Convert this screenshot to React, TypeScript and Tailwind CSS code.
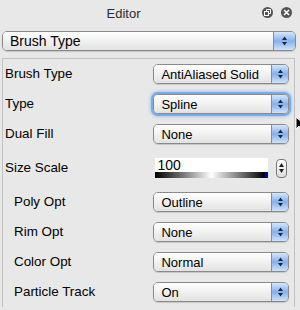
import type { JSX } from "react"

const font = { fontFamily: '"Liberation Sans", Arial, sans-serif' }

function Arrows(): JSX.Element {
  return (
    <svg width="7" height="12" viewBox="0 0 7 12" className="block">
      <path d="M3.5 1.5 L6 5 L1 5 Z" fill="#1b2a44" />
      <path d="M3.5 10.5 L6 7 L1 7 Z" fill="#1b2a44" />
    </svg>
  )
}

function Popup({ value, focus = false, wide = false }: { value: string; focus?: boolean; wide?: boolean }): JSX.Element {
  return (
    <div
      className={
        "flex h-[20px] items-stretch rounded-[5px] border border-[#8a8a8a] overflow-hidden " +
        (focus ? "shadow-[0_0_0_2px_#7fa9e4,0_0_3px_3px_#a9c6ef]" : "shadow-[0_1px_1px_rgba(0,0,0,0.15)]") +
        (wide ? " w-full" : " w-[137px]")
      }
    >
      <div className="flex flex-1 items-center bg-gradient-to-b from-[#ffffff] via-[#f1f1f1] to-[#e2e2e2] pl-[7px] text-[13px] leading-none text-[#000]">
        <span className={wide ? "text-[14px]" : ""}>{value}</span>
      </div>
      <div
        className={
          "flex items-center justify-center border-l border-[#6b8fc7] bg-gradient-to-b from-[#d7e7fb] via-[#86b1ea] to-[#cfe2fb] " +
          (wide ? "w-[22px]" : "w-[17px]")
        }
      >
        <Arrows />
      </div>
    </div>
  )
}

function Row({ label, indent = false, h = "h-[30px]", children }: { label: string; indent?: boolean; h?: string; children: JSX.Element }): JSX.Element {
  return (
    <div className={"flex items-center " + h}>
      <div className={"w-[150px] text-[13.4px] text-[#000] " + (indent ? "pl-[9px]" : "pl-0")}>{label}</div>
      {children}
    </div>
  )
}

export default function App(): JSX.Element {
  return (
    <div className="relative h-[310px] w-[300px] overflow-hidden bg-[#e8e8e8]" style={font}>
      {/* title bar */}
      <div className="relative flex h-[27px] items-center justify-center">
        <span className="ml-[-53px] text-[13px] text-[#2b2b2b]">Editor</span>
        <div className="absolute right-[8px] top-[7px] flex gap-[8px]">
          <div className="flex h-[11px] w-[11px] items-center justify-center rounded-full bg-[#555]">
            <svg width="7" height="7" viewBox="0 0 7 7">
              <rect x="0.5" y="2.5" width="4" height="4" fill="none" stroke="#fff" strokeWidth="1" />
              <path d="M2.5 2.5 V0.5 H6.5 V4.5 H4.5" fill="none" stroke="#fff" strokeWidth="1" />
            </svg>
          </div>
          <div className="flex h-[11px] w-[11px] items-center justify-center rounded-full bg-[#555]">
            <svg width="7" height="7" viewBox="0 0 7 7">
              <path d="M1 1 L6 6 M6 1 L1 6" stroke="#fff" strokeWidth="1.6" />
            </svg>
          </div>
        </div>
      </div>

      {/* section popup */}
      <div className="ml-[2px] mr-[4px] mt-[4px]">
        <Popup value="Brush Type" wide />
      </div>

      {/* property panel */}
      <div className="ml-[2px] mr-[5px] mt-[7px] border-l border-r border-t border-[#c2c2c2] pl-[2px] pr-[5px]">
        <Row label="Brush Type">
          <Popup value="AntiAliased Solid" />
        </Row>
        <Row label="Type">
          <Popup value="Spline" focus />
        </Row>
        <Row label="Dual Fill">
          <Popup value="None" />
        </Row>
        <Row label="Size Scale" h="h-[38px]">
          <div className="flex w-[137px] items-center">
            <div className="ml-[2px] flex h-[20px] w-[113px] flex-col bg-white">
              <div className="flex-1 pl-[2px] text-[14px] leading-[14px] text-[#000]">100</div>
              <div className="h-[6px] bg-[linear-gradient(to_right,#000_0%,#777_25%,#fff_50%,#777_75%,#000_97%,#0000cc_97%)]" />
            </div>
            <div className="ml-[8px] flex h-[19px] w-[11px] flex-col items-center justify-center gap-[2px] rounded-[4px] border border-[#777] bg-gradient-to-b from-white to-[#ddd]">
              <svg width="5" height="4" viewBox="0 0 5 4">
                <path d="M2.5 0 L5 4 L0 4 Z" fill="#222" />
              </svg>
              <svg width="5" height="4" viewBox="0 0 5 4">
                <path d="M2.5 4 L5 0 L0 0 Z" fill="#222" />
              </svg>
            </div>
          </div>
        </Row>
        <Row label="Poly Opt" indent>
          <Popup value="Outline" />
        </Row>
        <Row label="Rim Opt" indent>
          <Popup value="None" />
        </Row>
        <Row label="Color Opt" indent>
          <Popup value="Normal" />
        </Row>
        <Row label="Particle Track" indent>
          <Popup value="On" />
        </Row>
      </div>

      {/* mouse pointer at the window edge */}
      <svg className="absolute left-[295px] top-[116px]" width="10" height="16" viewBox="0 0 10 16">
        <path d="M1 1 L1 13 L4 10 L6 15 L8 14 L6 9 L10 9 Z" fill="#000" stroke="#fff" strokeWidth="1" />
      </svg>
    </div>
  )
}
